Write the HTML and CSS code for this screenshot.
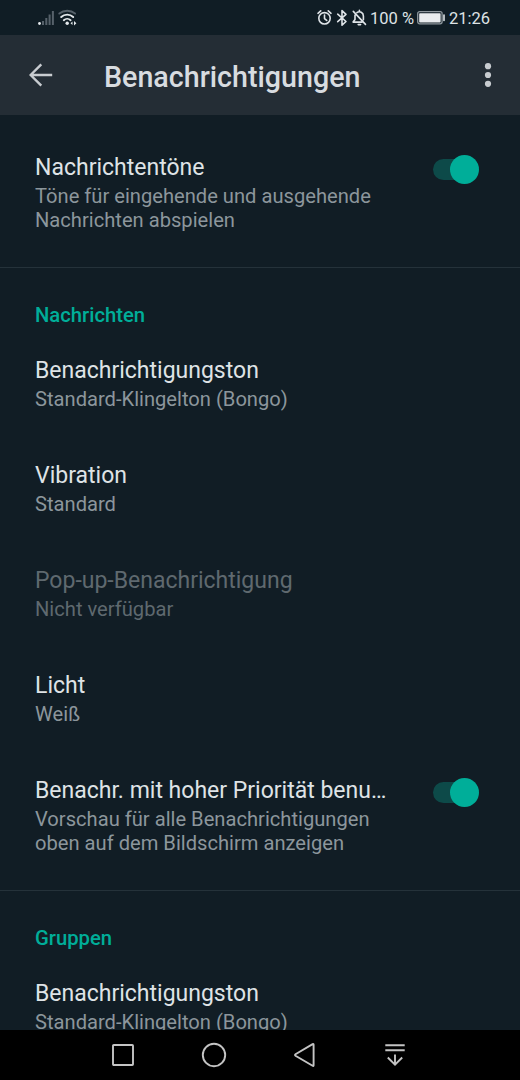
FILE: index.html
```
<!DOCTYPE html>
<html lang="de">
<head>
  <meta charset="utf-8">
  <title>Benachrichtigungen</title>
  <meta name="viewport" content="width=device-width, initial-scale=1">
  <link rel="stylesheet" href="styles.css">
</head>
<body>
  <div class="statusbar">
    <svg class="signal" width="42" height="20" viewBox="0 0 42 20">
      <g fill="#56616a">
        <rect x="4" y="13" width="2" height="4"/>
        <rect x="7.3" y="10" width="2" height="7"/>
        <rect x="10.6" y="6.5" width="2" height="10.5"/>
        <rect x="13.9" y="3" width="2" height="14"/>
      </g>
      <circle cx="1.5" cy="15.5" r="1.4" fill="#e4e9ec"/>
      <g fill="none" stroke-width="1.9" stroke-linecap="round">
        <path d="M21.3 5.6a12.5 12.5 0 0 1 15.8 0" stroke="#56616a"/>
        <path d="M23.2 9a8.7 8.7 0 0 1 12 0" stroke="#e4e9ec"/>
        <path d="M25.8 12.2a5 5 0 0 1 6.8 0" stroke="#e4e9ec"/>
      </g>
      <circle cx="29.2" cy="15.3" r="1.7" fill="#e4e9ec"/>
      <path d="M36 13v4.4l2.4-2.2zM34.5 13.4v3.6l-2-1.8z" fill="#e4e9ec"/>
    </svg>
    <div class="status-right">
      <svg width="50" height="18" viewBox="0 0 50 18" fill="none" stroke="#dfe4e8" stroke-width="1.6" stroke-linecap="round" stroke-linejoin="round">
        <circle cx="7.5" cy="9.3" r="5.7"/>
        <path d="M7.5 6v3.6l2.2 1.8M1 4.3l2.7-2.4M14 4.3l-2.7-2.4"/>
        <path d="M20.7 5.2l8.3 7.3-4 3.7V1.6l4 3.8-8.3 7.3"/>
        <path d="M36.3 2.4l12.2 13M38 6.1v4.5l-1.9 2.5h9M39.9 3.6c2.9-2 6.5 0 6.5 3.5v3.6M41.2 15.6h2.4M42.4 1.3v1"/>
      </svg>
      <span class="percent">100 %</span>
      <svg width="29" height="14" viewBox="0 0 29 14">
        <rect x=".7" y=".7" width="24.4" height="12.1" rx="2" fill="none" stroke="#8d969c" stroke-width="1.3"/>
        <rect x="2.2" y="2.2" width="21.4" height="9.2" rx=".7" fill="#e9ecee"/>
        <rect x="26.2" y="3.3" width="1.6" height="7" rx=".8" fill="#dfe4e8"/>
      </svg>
      <span class="clock">21:26</span>
    </div>
  </div>

  <header class="toolbar">
    <svg width="24" height="24" viewBox="0 0 24 24" fill="none" stroke="#c8ccd0" stroke-width="2.4">
      <path d="M23.2 12H2.2M12.3 1.3L1.6 12l10.7 10.7"/>
    </svg>
    <h1>Benachrichtigungen</h1>
    <svg width="8" height="26" viewBox="0 0 8 26" fill="#c8ccd0">
      <circle cx="4" cy="4.2" r="3.1"/>
      <circle cx="4" cy="13" r="3.1"/>
      <circle cx="4" cy="21.8" r="3.1"/>
    </svg>
  </header>

  <main class="settings">
    <section>
      <div class="item">
        <div class="text">
          <h3>Nachrichtentöne</h3>
          <p>Töne für eingehende und ausgehende Nachrichten abspielen</p>
        </div>
        <div class="switch"></div>
      </div>
    </section>

    <section>
      <h2>Nachrichten</h2>
      <div class="item">
        <div class="text">
          <h3>Benachrichtigungston</h3>
          <p>Standard-Klingelton (Bongo)</p>
        </div>
      </div>
      <div class="item">
        <div class="text">
          <h3>Vibration</h3>
          <p>Standard</p>
        </div>
      </div>
      <div class="item disabled">
        <div class="text">
          <h3>Pop-up-Benachrichtigung</h3>
          <p>Nicht verfügbar</p>
        </div>
      </div>
      <div class="item">
        <div class="text">
          <h3>Licht</h3>
          <p>Weiß</p>
        </div>
      </div>
      <div class="item">
        <div class="text">
          <h3>Benachr. mit hoher Priorität benu…</h3>
          <p>Vorschau für alle Benachrichtigungen oben auf dem Bildschirm anzeigen</p>
        </div>
        <div class="switch"></div>
      </div>
    </section>

    <section>
      <h2>Gruppen</h2>
      <div class="item">
        <div class="text">
          <h3>Benachrichtigungston</h3>
          <p>Standard-Klingelton (Bongo)</p>
        </div>
      </div>
    </section>
  </main>

  <nav class="navbar">
    <svg width="24" height="24" viewBox="0 0 24 24"><rect x="2" y="2" width="20" height="20" rx=".8"/></svg>
    <svg width="26" height="26" viewBox="0 0 26 26"><circle cx="13" cy="13" r="11.2"/></svg>
    <svg width="24" height="26" viewBox="0 0 24 26"><path d="M19.6 2.8v20.4q0 1.2-1 .6L1.5 13.7q-1-.7 0-1.4L18.6 2.2q1-.5 1 .6z"/></svg>
    <svg width="22" height="24" viewBox="0 0 22 24"><path d="M1.3 2.3h19.4M1.3 7.3h19.4M11 11.5v10M3.8 14.5l7.2 7.2 7.2-7.2"/></svg>
  </nav>
</body>
</html>
```

FILE: styles.css
```
* {
  margin: 0;
  padding: 0;
  box-sizing: border-box;
}

:root {
  --background: #111d25;
  --toolbar: #242d35;
  --divider: #25323a;
  --accent: #00ae99;
  --track: #0d4a49;
  --title: #dfe3e6;
  --summary: #8c969c;
}

body {
  background: var(--background);
  color: var(--title);
  font-family: Roboto, sans-serif;
  display: flex;
  flex-direction: column;
  height: 100vh;
  overflow: hidden;
}

svg {
  display: block;
  flex: none;
}

.statusbar {
  display: flex;
  align-items: center;
  justify-content: space-between;
  flex: none;
  height: 35px;
  padding: 0 30px 0 38px;
  background: #101d25;
  font-size: 16.5px;
}

.status-right {
  display: flex;
  align-items: center;
}

.percent {
  width: 44px;
  margin: 1px 3px 0 3px;
  white-space: nowrap;
}

.clock {
  width: 41px;
  margin: 1px 0 0 3px;
}

.toolbar {
  display: flex;
  align-items: center;
  flex: none;
  height: 80px;
  padding: 0 28px 0 29px;
  background: var(--toolbar);
}

.toolbar h1 {
  flex: 1;
  margin: 3px 0 0 51px;
  font-size: 28.65px;
  font-weight: 500;
  color: #d8dce0;
}

.settings {
  flex: 1;
  min-height: 0;
  overflow: hidden;
}

section {
  padding-bottom: 12px;
}

section:first-child {
  padding-top: 11px;
}

section + section {
  border-top: 1px solid var(--divider);
}

h2 {
  padding: 36px 35px 2px;
  font-size: 20.25px;
  font-weight: 500;
  line-height: 23.5px;
  color: var(--accent);
}

.item {
  display: flex;
  justify-content: space-between;
  padding: 28.25px 41px 22.25px 35px;
}

.text {
  width: 354px;
}

.item h3 {
  margin-bottom: 4px;
  font-size: 23px;
  font-weight: 400;
  line-height: 27px;
  white-space: nowrap;
}

.item p {
  font-size: 20.15px;
  line-height: 23.5px;
  color: var(--summary);
}

.disabled h3,
.disabled p {
  color: #5f696f;
}

.switch {
  position: relative;
  width: 46px;
  height: 29px;
  margin-top: 1px;
}

.switch::before,
.switch::after {
  content: "";
  position: absolute;
}

.switch::before {
  left: 0;
  top: 4px;
  width: 40px;
  height: 21px;
  border-radius: 11px;
  background: var(--track);
}

.switch::after {
  right: 0;
  top: 0;
  width: 29px;
  height: 29px;
  border-radius: 50%;
  background: var(--accent);
}

.navbar {
  display: flex;
  justify-content: space-between;
  align-items: center;
  flex: none;
  height: 50px;
  padding: 0 114px 0 111px;
  background: #000;
}

.navbar svg {
  fill: none;
  stroke: #c4c4c4;
  stroke-width: 1.9;
}
```
